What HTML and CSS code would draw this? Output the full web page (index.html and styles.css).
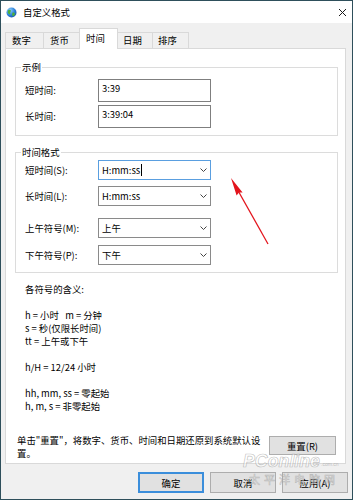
FILE: index.html
```html
<!DOCTYPE html>
<html lang="zh-CN">
<head>
<meta charset="utf-8">
<title>自定义格式</title>
<link rel="stylesheet" href="styles.css">
</head>
<body>
<div class="window">
  <div class="titlebar">
    <svg class="app-icon" viewBox="0 0 11 11" aria-hidden="true">
      <defs>
        <radialGradient id="gl" cx="0.35" cy="0.3" r="0.8">
          <stop offset="0" stop-color="#8fd0ff"/>
          <stop offset="0.6" stop-color="#2a7fd8"/>
          <stop offset="1" stop-color="#1650a8"/>
        </radialGradient>
      </defs>
      <circle cx="5.5" cy="5.5" r="5" fill="url(#gl)"/>
      <path d="M2.2 3.2 C3.2 2.4 4.6 2.6 4.9 3.6 C5.1 4.5 4 4.9 4.3 6 C4.5 6.9 3.6 7.6 2.8 7.1 C1.7 6.3 1.3 4.2 2.2 3.2 Z" fill="#4caf3a"/>
      <path d="M6.6 5.6 C7.6 5.2 8.9 5.8 9 7 C8.6 8.4 7.5 9.3 6.6 9 C6 8.3 6.2 6.4 6.6 5.6 Z" fill="#4caf3a"/>
    </svg>
    <span class="title">自定义格式</span>
    <svg class="close" viewBox="0 0 7 7" aria-hidden="true">
      <path d="M0 0 L7 7 M7 0 L0 7" stroke="#1a1a1a" stroke-width="1" fill="none"/>
    </svg>
  </div>

  <div class="main">
    <div class="tabs">
      <div class="tab w1">数字</div>
      <div class="tab w2">货币</div>
      <div class="tab w3 selected">时间</div>
      <div class="tab w4">日期</div>
      <div class="tab w5">排序</div>
    </div>

    <div class="panel">
      <fieldset class="group g1">
        <legend>示例</legend>
        <div class="row">
          <span class="label">短时间:</span>
          <div class="textbox">3:39</div>
        </div>
        <div class="row">
          <span class="label">长时间:</span>
          <div class="textbox">3:39:04</div>
        </div>
      </fieldset>

      <fieldset class="group g2">
        <legend>时间格式</legend>
        <div class="row r1">
          <span class="label">短时间(S):</span>
          <div class="combo focus"><span class="value">H:mm:ss</span><span class="caret"></span>
            <svg class="chev" viewBox="0 0 7 4" aria-hidden="true"><path d="M0.5 0.5 L3.5 3.5 L6.5 0.5" stroke="#444" fill="none"/></svg>
          </div>
        </div>
        <div class="row r2">
          <span class="label">长时间(L):</span>
          <div class="combo"><span class="value">H:mm:ss</span>
            <svg class="chev" viewBox="0 0 7 4" aria-hidden="true"><path d="M0.5 0.5 L3.5 3.5 L6.5 0.5" stroke="#444" fill="none"/></svg>
          </div>
        </div>
        <div class="row r3">
          <span class="label">上午符号(M):</span>
          <div class="combo"><span class="value">上午</span>
            <svg class="chev" viewBox="0 0 7 4" aria-hidden="true"><path d="M0.5 0.5 L3.5 3.5 L6.5 0.5" stroke="#444" fill="none"/></svg>
          </div>
        </div>
        <div class="row r4">
          <span class="label">下午符号(P):</span>
          <div class="combo"><span class="value">下午</span>
            <svg class="chev" viewBox="0 0 7 4" aria-hidden="true"><path d="M0.5 0.5 L3.5 3.5 L6.5 0.5" stroke="#444" fill="none"/></svg>
          </div>
        </div>
      </fieldset>

      <div class="meanings">各符号的含义:

h = 小时   m = 分钟
s = 秒(仅限长时间)
tt = 上午或下午

h/H = 12/24 小时

hh, mm, ss = 零起始
h, m, s = 非零起始</div>

      <div class="reset-row">
        <div class="reset-text">
          <span class="line">单击"重置"，将数字、货币、时间和日期还原到系统默认设</span>
          <span class="line">置。</span>
        </div>
        <button class="btn reset-btn">重置(R)</button>
      </div>
    </div>

    <div class="buttons">
      <button class="btn default">确定</button>
      <button class="btn">取消</button>
      <button class="btn">应用(A)</button>
    </div>
  </div>

  <svg class="overlay" viewBox="1 1 351 498" aria-hidden="true">
    <line x1="268" y1="244" x2="236" y2="187" stroke="#e3141c" stroke-width="1.3"/>
    <path d="M231 178 L242.6 192.4 L239 192.6 L236.6 195.6 Z" fill="#e3141c"/>
    <text x="243" y="467" class="wm-big" textLength="77" lengthAdjust="spacingAndGlyphs">PConline</text>
    <text x="321" y="466" class="wm-small">.com.cn</text>
    <text x="249" y="484" class="wm-cn" textLength="86" lengthAdjust="spacing">太平洋电脑网</text>
  </svg>
</div>
</body>
</html>
```

FILE: styles.css
```css
html, body {
  margin: 0;
  padding: 0;
  background: #ffffff;
}

.window {
  position: relative;
  width: 353px;
  height: 500px;
  box-sizing: border-box;
  border: 1px solid #2e4f5b;
  background: #f0f0f0;
  display: flex;
  flex-direction: column;
  overflow: hidden;
  font-family: "Noto Sans CJK SC", "Noto Sans", sans-serif;
  font-size: 9.4px;
  line-height: 13px;
  color: #000;
}

/* title bar */
.titlebar {
  flex: none;
  height: 22px;
  background: #ffffff;
  display: flex;
  align-items: center;
  padding: 0 6px 0 5px;
}
.app-icon {
  width: 11px;
  height: 11px;
  margin-right: 6px;
  flex: none;
}
.title {
  font-size: 9.4px;
}
.close {
  margin-left: auto;
  width: 7px;
  height: 7px;
}

/* main area */
.main {
  flex: 1;
  display: flex;
  flex-direction: column;
  padding: 5px 6px 0 4px;
}

.tabs {
  position: relative;
  z-index: 1;
  display: flex;
  align-items: flex-end;
  height: 20px;
}
.tab {
  box-sizing: border-box;
  height: 16px;
  border: 1px solid #d9d9d9;
  border-bottom: none;
  background: #f0f0f0;
  margin-right: -1px;
  padding-left: 6px;
  line-height: 14px;
  white-space: nowrap;
}
.tab.w1 { width: 39px; }
.tab.w2 { width: 37px; }
.tab.w3 { width: 39px; }
.tab.w4 { width: 36px; padding-left: 5px; }
.tab.w5 { width: 37px; padding-left: 5px; }
.tab.selected {
  position: relative;
  z-index: 2;
  height: 21px;
  margin-bottom: -1px;
  background: #ffffff;
  padding-top: 2px;
}

.panel {
  flex: none;
  height: 416px;
  box-sizing: border-box;
  border: 1px solid #d9d9d9;
  background: #ffffff;
  display: flex;
  flex-direction: column;
  padding: 0 7px 0 9px;
}

/* group boxes */
.group {
  margin: 0;
  min-width: 0;
  border: 1px solid #dcdcdc;
  padding: 0 8px 7px 9px;
}
.group legend {
  padding: 0 1px;
  margin-left: -4px;
  line-height: 14px;
}
.g1 {
  margin-top: 11px;
  padding-top: 5px;
}
.g2 {
  margin-top: 9px;
  padding-top: 1px;
}

.row {
  display: flex;
  align-items: center;
}
.label {
  width: 73px;
  flex: none;
  white-space: nowrap;
}
.g1 .row + .row { margin-top: 3px; }
.g2 .r2 { margin-top: 6px; }
.g2 .r3 { margin-top: 12px; }
.g2 .r4 { margin-top: 7px; }

.textbox {
  width: 113px;
  height: 23px;
  box-sizing: border-box;
  border: 1px solid #7f7f7f;
  padding: 2px 3px 0;
  line-height: 12px;
}

.combo {
  width: 113px;
  height: 20px;
  box-sizing: border-box;
  border: 1px solid #8a8a8a;
  padding: 0 3px;
  display: flex;
  align-items: center;
}
.combo.focus {
  border-color: #5a9fe0;
}
.combo .value {
  line-height: 12px;
}
.caret {
  display: inline-block;
  width: 1px;
  height: 12px;
  background: #000;
  margin-left: 1px;
}
.chev {
  margin-left: auto;
  width: 7px;
  height: 4px;
}

/* legend of symbols */
.meanings {
  margin: 10px 0 0 10px;
  white-space: pre;
  line-height: 13px;
}

/* reset row */
.reset-row {
  margin: auto 2px 0 2px;
  display: flex;
  align-items: flex-start;
  padding-bottom: 3px;
}
.reset-text {
  width: 250px;
  line-height: 13px;
}
.reset-text .line {
  display: block;
  white-space: nowrap;
}

.btn {
  font-family: inherit;
  font-size: 9.4px;
  line-height: 12px;
  color: #000;
  background: #e1e1e1;
  border: 1px solid #adadad;
  box-sizing: border-box;
  padding: 0;
  margin: 0;
}
.reset-btn {
  margin-left: auto;
  margin-top: 2px;
  width: 67px;
  height: 19px;
}

.buttons {
  display: flex;
  justify-content: flex-end;
  gap: 6px;
  padding-top: 8px;
  margin-right: -2px;
}
.buttons .btn {
  width: 66px;
  height: 21px;
}
.buttons .btn.default {
  border: 2px solid #3b8edb;
}

/* annotation overlay */
.overlay {
  position: absolute;
  left: 0;
  top: 0;
  width: 351px;
  height: 498px;
  pointer-events: none;
}
.wm-big {
  font-family: "Liberation Sans", sans-serif;
  font-size: 19px;
  font-weight: bold;
  font-style: italic;
  fill: rgba(255, 255, 255, 0.55);
  stroke: rgba(140, 140, 140, 0.55);
  stroke-width: 0.7;
}
.wm-small {
  font-family: "Liberation Sans", sans-serif;
  font-size: 5px;
  fill: rgba(150, 150, 150, 0.6);
}
.wm-cn {
  font-family: "Noto Sans CJK SC", sans-serif;
  font-size: 11px;
  fill: rgba(255, 255, 255, 0.5);
  stroke: rgba(140, 140, 140, 0.5);
  stroke-width: 0.6;
}
```
